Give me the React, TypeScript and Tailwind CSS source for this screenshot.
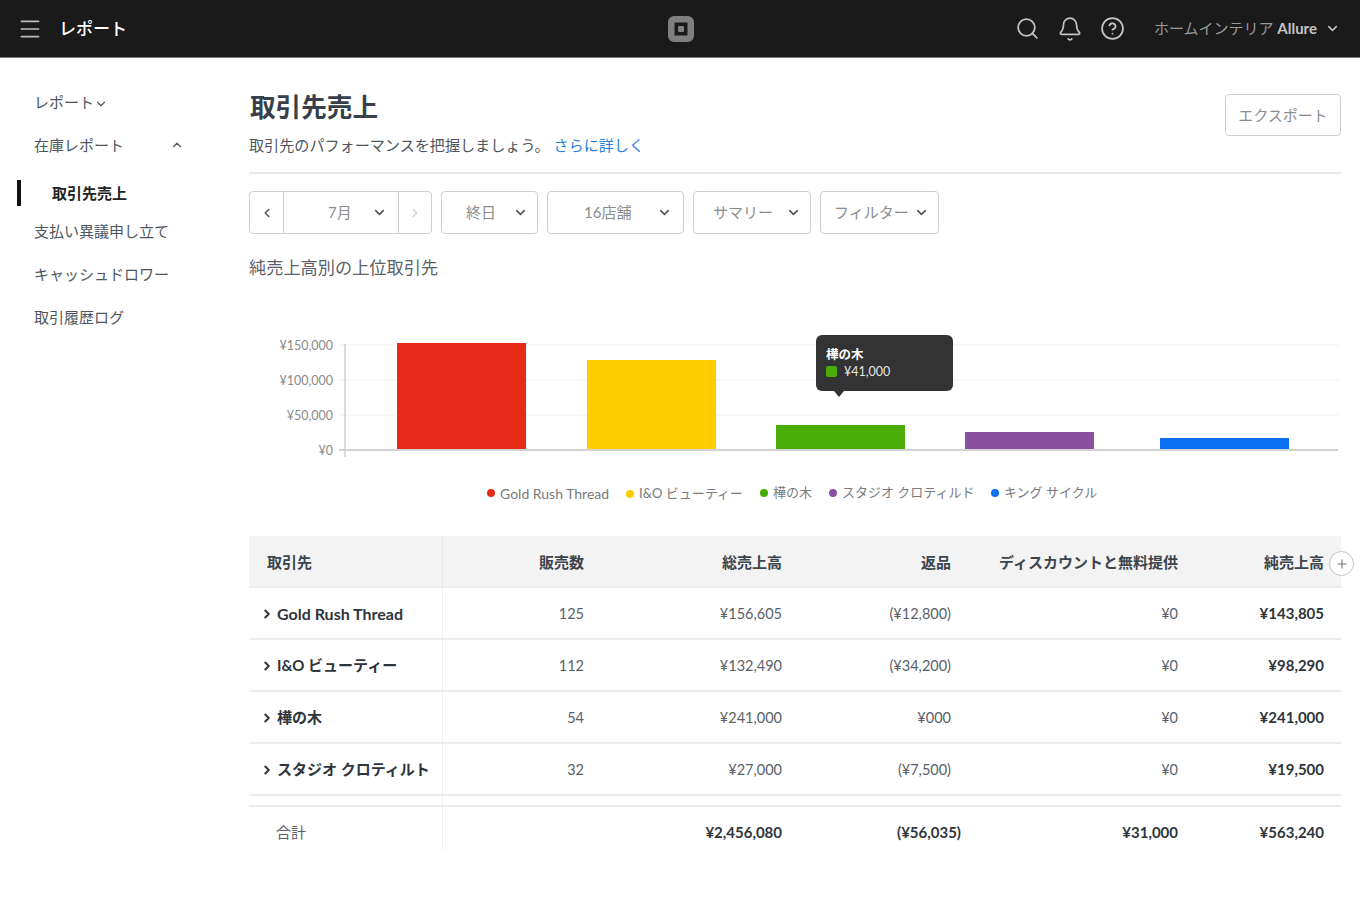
import { Bell, ChevronDown, ChevronLeft, ChevronRight, ChevronUp, CircleHelp, Menu, Plus, Search } from "lucide-react";

const SIDE_ITEMS = ["支払い異議申し立て", "キャッシュドロワー", "取引履歴ログ"];

const FILTERS = [
  { label: "終日", width: "w-[97px]", pad: "pl-6", gap: "gap-[17px]" },
  { label: "16店舗", width: "w-[137px]", pad: "pl-9", gap: "gap-[26px]" },
  { label: "サマリー", width: "w-[118px]", pad: "pl-[19px]", gap: "gap-[13px]" },
  { label: "フィルター", width: "w-[119px]", pad: "pl-[13px]", gap: "gap-[5px]" },
];

const BARS = [
  { x: 148, top: 13, w: 129, h: 106, color: "#e52b18" },
  { x: 338, top: 30, w: 129, h: 89, color: "#ffcc00" },
  { x: 527, top: 95, w: 129, h: 24, color: "#4aad05" },
  { x: 716, top: 102, w: 129, h: 17, color: "#8a50a0" },
  { x: 911, top: 108, w: 129, h: 11, color: "#0a6ff0" },
];

const TICKS = [
  { y: 15, label: "¥150,000" },
  { y: 50, label: "¥100,000" },
  { y: 85, label: "¥50,000" },
  { y: 120, label: "¥0" },
];

const LEGEND = [
  { label: "Gold Rush Thread", color: "bg-[#e52b18]", cls: "w-[139px] text-[14px]" },
  { label: "I&O ビューティー", color: "bg-[#ffcc00]", cls: "w-[134px] translate-y-px" },
  { label: "樺の木", color: "bg-[#4aad05]", cls: "w-[69px]" },
  { label: "スタジオ クロティルド", color: "bg-[#8a50a0]", cls: "w-[162px]" },
  { label: "キング サイクル", color: "bg-[#0a6ff0]", cls: "" },
];

const ROWS = [
  ["Gold Rush Thread", "125", "¥156,605", "(¥12,800)", "¥0", "¥143,805"],
  ["I&O ビューティー", "112", "¥132,490", "(¥34,200)", "¥0", "¥98,290"],
  ["樺の木", "54", "¥241,000", "¥000", "¥0", "¥241,000"],
  ["スタジオ クロティルト", "32", "¥27,000", "(¥7,500)", "¥0", "¥19,500"],
];

const COLS = "grid grid-cols-[194px_141px_198px_169px_227px_146px_17px]";

function SquareLogo() {
  return (
    <svg width="26" height="26" viewBox="0 0 26 26" fill="none">
      <rect x="3.25" y="3.25" width="19.5" height="19.5" rx="3" stroke="#7f7f7f" strokeWidth="6.5" />
      <rect x="10" y="10" width="6" height="6" rx="1" fill="#7f7f7f" />
    </svg>
  );
}

function Header() {
  return (
    <header className="grid h-[58px] grid-cols-[1fr_auto_1fr] items-center border-b border-[#777] bg-[#1a1a1a] pl-[16px] pr-[14px]">
      <div className="flex items-center gap-[15px]">
        <Menu className="h-[26px] w-[28px] text-[#bdbdbd]" strokeWidth={1.5} />
        <span className="text-[17px] font-medium text-white">レポート</span>
      </div>
      <SquareLogo />
      <div className="flex items-center justify-end pr-[6px] text-[#c4c4c4]">
        <Search className="h-[25px] w-[25px]" strokeWidth={1.7} />
        <Bell className="ml-[17px] h-[26px] w-[26px]" strokeWidth={1.5} />
        <CircleHelp className="ml-[17px] h-[25px] w-[25px]" strokeWidth={1.7} />
        <span className="ml-[29px] text-[15px] text-[#9a9a9a]">
          ホームインテリア <b className="font-bold text-[#c4c4c4]">Allure</b>
        </span>
        <ChevronDown className="ml-[8px] h-[15px] w-[15px]" strokeWidth={2.4} />
      </div>
    </header>
  );
}

function Sidebar() {
  return (
    <aside className="w-[249px] shrink-0 pt-[33px] text-[15px] text-[#4d5660]">
      <div className="flex h-[22px] items-center pl-[34px]">
        レポート
        <ChevronDown className="mt-1 h-[14px] w-[14px]" strokeWidth={2} />
      </div>
      <div className="mt-[21px] flex h-[22px] w-[184px] items-center justify-between pl-[34px]">
        在庫レポート
        <ChevronUp className="h-[14px] w-[14px]" strokeWidth={2} />
      </div>
      <div className="mt-[24px] ml-[17px] flex h-[26px] items-center border-l-4 border-[#111] pl-[31px] font-bold text-[#222]">
        取引先売上
      </div>
      <div className="mt-[14px] flex flex-col gap-[21px] pl-[34px]">
        {SIDE_ITEMS.map((item) => (
          <div key={item} className="h-[22px] leading-[22px]">
            {item}
          </div>
        ))}
      </div>
    </aside>
  );
}

function Select({ label, width, pad, gap }: (typeof FILTERS)[number]) {
  return (
    <div
      className={`flex h-[43px] items-center rounded-[4px] border-[1.5px] border-[#cfcfcf] text-[15px] text-[#8c8c8c] ${width} ${pad} ${gap}`}
    >
      <span>{label}</span>
      <ChevronDown className="h-[15px] w-[15px] text-[#555]" strokeWidth={2.6} />
    </div>
  );
}

function Chart() {
  return (
    <div className="relative mt-[50px] h-[153px]">
      <svg width="1092" height="153" viewBox="0 0 1092 153" className="block">
        {TICKS.map((t) => (
          <g key={t.y}>
            <line x1="90" x2="1089" y1={t.y} y2={t.y} stroke={t.y === 120 ? "#c4c4c4" : "#eeeeee"} strokeWidth={t.y === 120 ? 1.6 : 1} />
            <text x="84" y={t.y + 5} textAnchor="end" fontSize="12.5" fill="#8a8a8a">
              {t.label}
            </text>
          </g>
        ))}
        <line x1="96" x2="96" y1="14" y2="127" stroke="#c4c4c4" strokeWidth="1.2" />
        {BARS.map((b) => (
          <rect key={b.x} x={b.x} y={b.top} width={b.w} height={b.h} fill={b.color} />
        ))}
      </svg>
      <div className="absolute left-[567px] top-[5px] h-[56px] w-[137px] rounded-[6px] bg-[#333333] pl-[10px] pt-[11px] text-[12.5px] leading-[17px] text-white">
        <div className="font-bold">樺の木</div>
        <div className="flex items-center gap-[7px] text-[#e5e5e5]">
          <span className="h-[11px] w-[11px] rounded-[2px] bg-[#4aad05]" />
          ¥41,000
        </div>
        <span className="absolute left-[18px] top-[56px] border-x-[5px] border-t-[6px] border-x-transparent border-t-[#333333]" />
      </div>
    </div>
  );
}

function Legend() {
  return (
    <div className="-mt-px flex h-[22px] items-center pl-[238px] text-[13px] text-[#7a7a7a]">
      {LEGEND.map((l) => (
        <div key={l.label} className={`flex items-center gap-[5px] whitespace-nowrap ${l.cls}`}>
          <span className={`h-[8px] w-[8px] rounded-full ${l.color}`} />
          {l.label}
        </div>
      ))}
    </div>
  );
}

function SalesTable() {
  return (
    <div className="relative mt-[32px] text-[14.5px] text-[#3c444d]">
      <div className={`${COLS} h-[52px] items-center border-b-2 border-[#ececec] bg-[#f3f3f3] text-[15px] font-bold`}>
        <div className="flex h-full items-center border-r border-[#e8e8e8] pl-[18px] pt-[3px]">取引先</div>
        <div className="pt-[3px] text-right">販売数</div>
        <div className="pt-[3px] text-right">総売上高</div>
        <div className="pt-[3px] text-right">返品</div>
        <div className="pt-[3px] text-right">ディスカウントと無料提供</div>
        <div className="pt-[3px] text-right">純売上高</div>
      </div>
      <span className="absolute right-[-13px] top-[15px] flex h-[25px] w-[25px] items-center justify-center rounded-full border border-[#c4c4c4] bg-white text-[#777]">
        <Plus className="h-[14px] w-[14px]" strokeWidth={2} />
      </span>
      {ROWS.map(([name, ...cells], r) => (
        <div key={name} className={`${COLS} h-[52px] items-center border-b-2 border-[#ececec]`}>
          <div
            className={`flex h-full items-center gap-[3px] border-r border-[#eeeeee] pl-[11px] pt-px font-bold whitespace-nowrap text-[#2f353c] ${r === 0 ? "text-[16px]" : "text-[15px]"}`}
          >
            <ChevronRight className="h-[14px] w-[14px] shrink-0" strokeWidth={3.4} />
            {name}
          </div>
          {cells.map((cell, i) => (
            <div key={i} className={`pt-px text-right ${i === 4 ? "text-[15px] font-bold text-[#2f353c]" : "text-[#5a6168]"}`}>
              {cell}
            </div>
          ))}
        </div>
      ))}
      <div className="flex h-[11px] border-b-2 border-[#ececec]">
        <div className="w-[194px] border-r border-[#eeeeee]" />
      </div>
      <div className={`${COLS} h-[43px] items-center text-[15px] font-bold text-[#2f353c]`}>
        <div className="flex h-full items-center border-r border-[#eeeeee] pl-[27px] pt-[8px] font-normal text-[#5a6168]">合計</div>
        <div />
        <div className="pt-[7px] text-right">¥2,456,080</div>
        <div className="mr-[-10px] pt-[7px] text-right">(¥56,035)</div>
        <div className="pt-[7px] text-right">¥31,000</div>
        <div className="pt-[7px] text-right">¥563,240</div>
      </div>
    </div>
  );
}

export default function App() {
  return (
    <div className="h-[907px] overflow-hidden bg-white font-['Lato','Noto_Sans_CJK_JP',sans-serif]">
      <Header />
      <div className="flex">
        <Sidebar />
        <main className="w-[1092px] pt-[36px]">
          <div className="flex items-start justify-between border-b-2 border-[#e8e8e8] pb-[16px]">
            <div>
              <h1 className="ml-px text-[25.6px] leading-[26px] font-bold text-[#373f4a]">取引先売上</h1>
              <p className="mt-[14px] text-[15.1px] leading-[22px] text-[#4d5660]">
                取引先のパフォーマンスを把握しましょう。 <span className="text-[#2b7fd8]">さらに詳しく</span>
              </p>
            </div>
            <button className="h-[42px] w-[116px] rounded-[4px] border-[1.5px] border-[#cfcfcf] text-[15px] text-[#8c8c8c]">
              エクスポート
            </button>
          </div>

          <div className="mt-[17px] flex gap-[9px]">
            <div className="flex h-[43px] w-[183px] items-center rounded-[4px] border-[1.5px] border-[#cfcfcf] text-[15px] text-[#8c8c8c]">
              <span className="flex h-full w-[34px] items-center justify-center border-r-[1.5px] border-[#cfcfcf] text-[#555]">
                <ChevronLeft className="h-[14px] w-[14px]" strokeWidth={2.6} />
              </span>
              <span className="flex h-full w-[115px] items-center border-r-[1.5px] border-[#cfcfcf] pl-[44px]">
                7月
                <ChevronDown className="ml-[20px] h-[15px] w-[15px] text-[#555]" strokeWidth={2.6} />
              </span>
              <span className="flex h-full flex-1 items-center justify-center text-[#d0d0d0]">
                <ChevronRight className="h-[14px] w-[14px]" strokeWidth={2.2} />
              </span>
            </div>
            {FILTERS.map((f) => (
              <Select key={f.label} {...f} />
            ))}
          </div>

          <h2 className="mt-[22px] text-[17.2px] leading-[24px] text-[#5a6168]">純売上高別の上位取引先</h2>
          <Chart />
          <Legend />
          <SalesTable />
        </main>
      </div>
    </div>
  );
}
